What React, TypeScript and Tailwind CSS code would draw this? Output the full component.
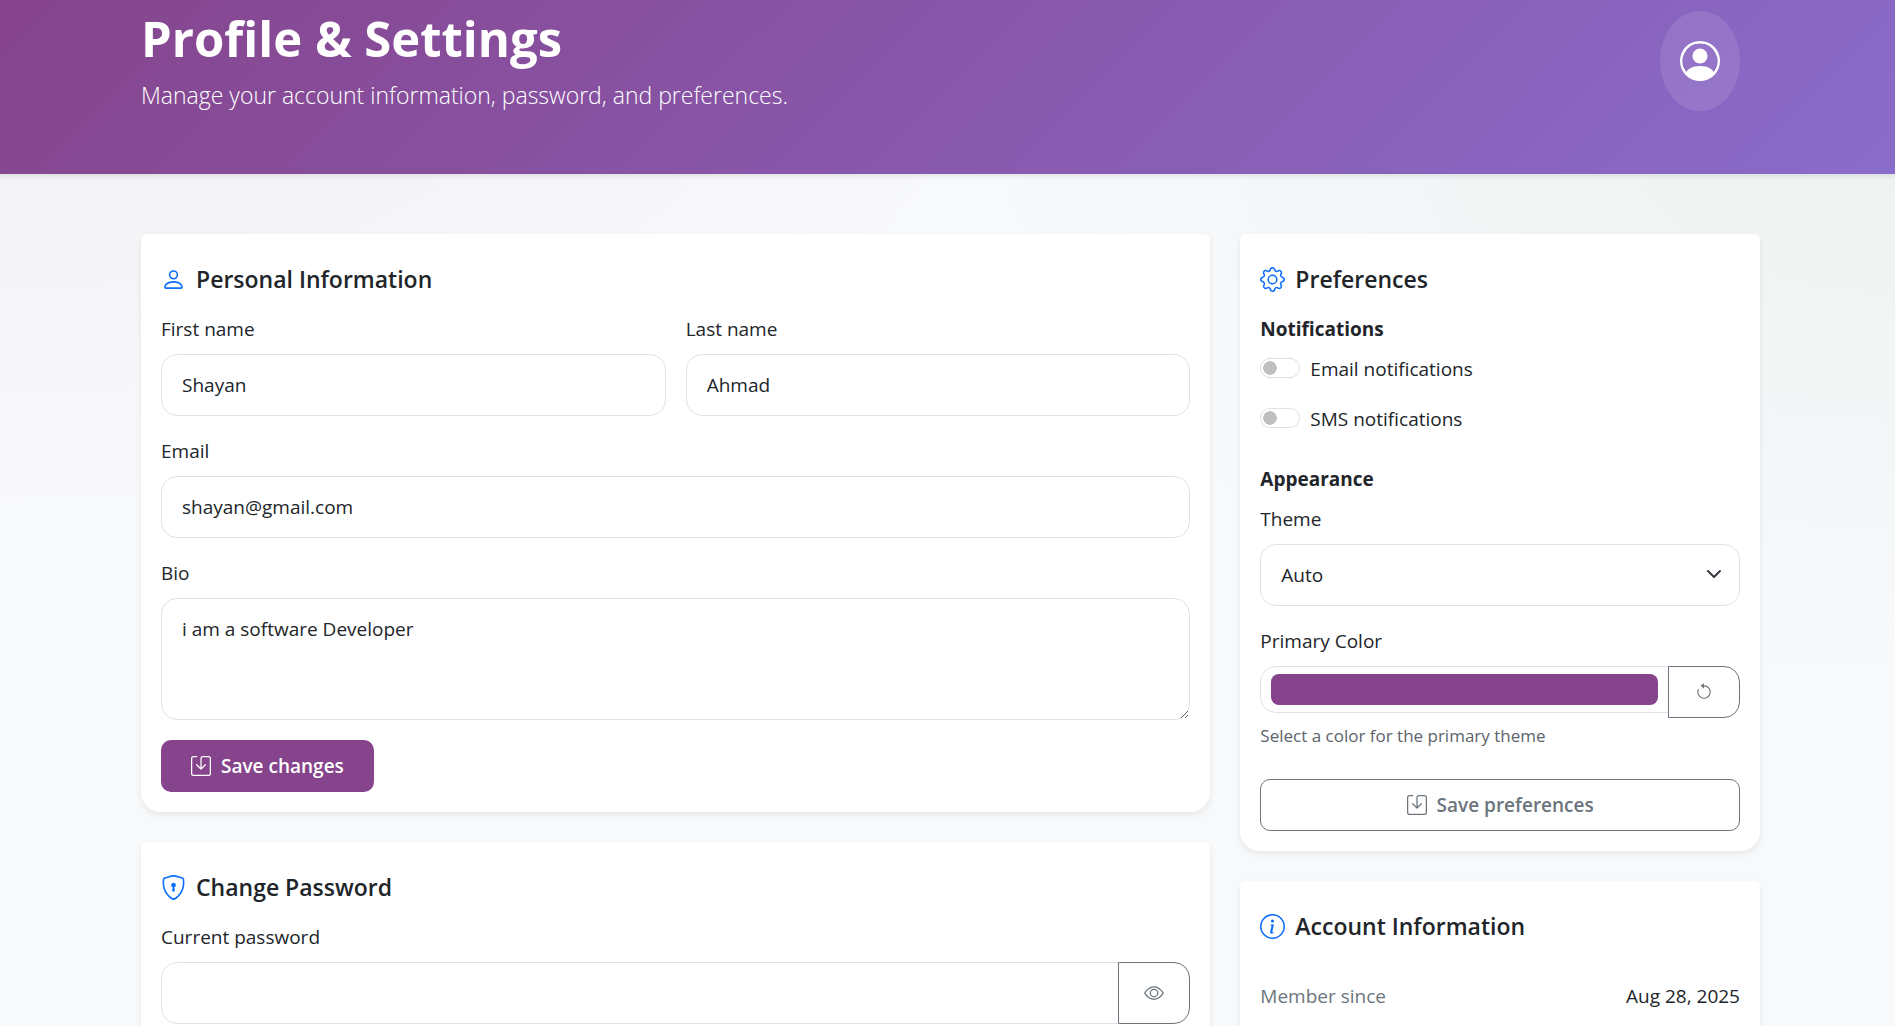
import { useState } from "react";
import type { ReactNode } from "react";
import {
  BsArrowCounterclockwise,
  BsEye,
  BsGear,
  BsInfoCircle,
  BsPerson,
  BsPersonCircle,
  BsSave,
  BsShieldLock,
} from "react-icons/bs";

const field =
  "block w-full rounded-2xl border border-[#dee2e6] bg-white px-5 py-[15px] text-[19px] leading-[30px] text-[#212529] outline-none";
const label = "mb-2.5 block text-[19px] leading-[30px] text-[#212529]";
const addon =
  "-ml-px flex w-18 shrink-0 items-center justify-center rounded-r-2xl border border-[#6c757d] bg-white text-[#6c757d]";

function Card({ icon, title, children }: { icon: ReactNode; title: string; children: ReactNode }) {
  return (
    <section className="rounded-t-md rounded-b-[20px] bg-white px-5 pt-[30px] pb-5 shadow-[0_3px_6px_rgba(0,0,0,0.07)]">
      <h2 className="mb-5 flex items-center gap-2.5 text-[23px] leading-[30px] font-semibold text-[#212529]">
        <span className="text-[25px] text-[#0d6efd]">{icon}</span>
        {title}
      </h2>
      {children}
    </section>
  );
}

function Toggle({ id, text }: { id: string; text: string }) {
  const [on, setOn] = useState(false);
  return (
    <div className="flex items-center gap-2.5">
      <input
        id={id}
        type="checkbox"
        role="switch"
        checked={on}
        onChange={(e) => setOn(e.target.checked)}
        className="mb-0.5 h-5 w-10 appearance-none rounded-full border border-[#dee2e6] bg-white bg-[radial-gradient(circle_at_9px_9px,#bfbfbf_6.5px,transparent_7px)] checked:bg-[#86448c]"
      />
      <label htmlFor={id} className="text-[19px] leading-[30px]">
        {text}
      </label>
    </div>
  );
}

export default function App() {
  const [color, setColor] = useState("#86448c");
  const [shown, setShown] = useState(false);
  return (
    <div className="min-h-screen overflow-x-hidden bg-[#f8f9fb] bg-[radial-gradient(1000px_500px_at_0%_0%,#f1f0f3,transparent),radial-gradient(900px_540px_at_100%_12%,#edf3f1,transparent)] pb-10 font-['Open_Sans','Noto_Sans',sans-serif] text-[#212529]">
      <header className="bg-[linear-gradient(135deg,#86448c,#8a6ccb)] pt-2 pr-[155px] pb-[60px] pl-[141px] text-white shadow-[0_2px_6px_rgba(0,0,0,0.1)]">
        <div className="flex items-center justify-between">
          <div>
            <h1 className="mb-2 text-[49px] leading-[60px] font-bold">Profile &amp; Settings</h1>
            <p className="text-[23px] leading-[38px] font-light">
              Manage your account information, password, and preferences.
            </p>
          </div>
          <div className="flex h-[100px] w-20 items-center justify-center rounded-[50%] bg-white/10 text-[40px]">
            <BsPersonCircle />
          </div>
        </div>
      </header>

      <main className="grid grid-cols-3 items-start gap-[30px] pt-[60px] pr-[135px] pl-[141px]">
        <div className="col-span-2 flex flex-col gap-[30px]">
          <Card icon={<BsPerson />} title="Personal Information">
            <form className="flex flex-col gap-5" onSubmit={(e) => e.preventDefault()}>
              <div className="grid grid-cols-2 gap-5">
                <div>
                  <label htmlFor="first" className={label}>First name</label>
                  <input id="first" defaultValue="Shayan" className={field} />
                </div>
                <div>
                  <label htmlFor="last" className={label}>Last name</label>
                  <input id="last" defaultValue="Ahmad" className={field} />
                </div>
              </div>
              <div>
                <label htmlFor="email" className={label}>Email</label>
                <input id="email" type="email" defaultValue="shayan@gmail.com" className={field} />
              </div>
              <div>
                <label htmlFor="bio" className={label}>Bio</label>
                <textarea id="bio" rows={3} defaultValue="i am a software Developer" className={field} />
              </div>
              <button
                type="submit"
                className="flex h-[52px] items-center gap-2.5 self-start rounded-[10px] bg-[#86448c] px-[30px] text-[19px] font-semibold text-white"
              >
                <BsSave className="size-5" />
                Save changes
              </button>
            </form>
          </Card>

          <Card icon={<BsShieldLock />} title="Change Password">
            <label htmlFor="current" className={label}>Current password</label>
            <div className="flex">
              <input
                id="current"
                type={shown ? "text" : "password"}
                className="h-[62px] min-w-0 flex-1 rounded-l-2xl border border-[#dee2e6] px-5 text-[19px] outline-none"
              />
              <button
                type="button"
                aria-label="Show password"
                onClick={() => setShown(!shown)}
                className={addon}
              >
                <BsEye className="size-5" />
              </button>
            </div>
          </Card>
        </div>

        <div className="flex flex-col gap-[30px]">
          <Card icon={<BsGear />} title="Preferences">
            <h3 className="mb-2.5 text-[19px] leading-[30px] font-bold">Notifications</h3>
            <div className="mb-[30px] flex flex-col gap-5">
              <Toggle id="notify-email" text="Email notifications" />
              <Toggle id="notify-sms" text="SMS notifications" />
            </div>
            <h3 className="mb-2.5 text-[19px] leading-[30px] font-bold">Appearance</h3>
            <label htmlFor="theme" className={label}>Theme</label>
            <div className="relative mb-5">
              <select
                id="theme"
                defaultValue="Auto"
                className="block h-[62px] w-full appearance-none rounded-2xl border border-[#dee2e6] bg-white px-5 text-[19px] outline-none"
              >
                <option>Auto</option>
                <option>Light</option>
                <option>Dark</option>
              </select>
              <svg
                viewBox="0 0 16 16"
                className="pointer-events-none absolute top-[22px] right-[18px] size-4"
                fill="none"
                stroke="#343a40"
                strokeWidth="2"
                strokeLinecap="round"
                strokeLinejoin="round"
              >
                <path d="m2 5 6 6 6-6" />
              </svg>
            </div>
            <label htmlFor="color" className={label}>Primary Color</label>
            <div className="mb-[5px] flex items-start">
              <input
                id="color"
                type="color"
                value={color}
                onChange={(e) => setColor(e.target.value)}
                className="h-[47px] min-w-0 flex-1 rounded-l-2xl border border-[#dee2e6] bg-white px-2.5 py-[7px] [&::-webkit-color-swatch]:rounded-lg [&::-webkit-color-swatch]:border-0 [&::-webkit-color-swatch-wrapper]:p-0"
              />
              <button
                type="button"
                aria-label="Reset color"
                onClick={() => setColor("#86448c")}
                className={`${addon} h-[52px]`}
              >
                <BsArrowCounterclockwise className="size-[18px]" />
              </button>
            </div>
            <p className="mb-[30px] text-[17px] leading-[26px] text-[#5c636a]">
              Select a color for the primary theme
            </p>
            <button
              type="button"
              className="flex h-[52px] w-full items-center justify-center gap-2.5 rounded-[10px] border border-[#6c757d] bg-white text-[19px] font-semibold text-[#6c757d]"
            >
              <BsSave className="size-5" />
              Save preferences
            </button>
          </Card>

          <Card icon={<BsInfoCircle />} title="Account Information">
            <dl className="flex justify-between pt-5 pb-5 text-[19px] leading-[30px]">
              <dt className="text-[#6c757d]">Member since</dt>
              <dd>Aug 28, 2025</dd>
            </dl>
          </Card>
        </div>
      </main>
    </div>
  );
}
